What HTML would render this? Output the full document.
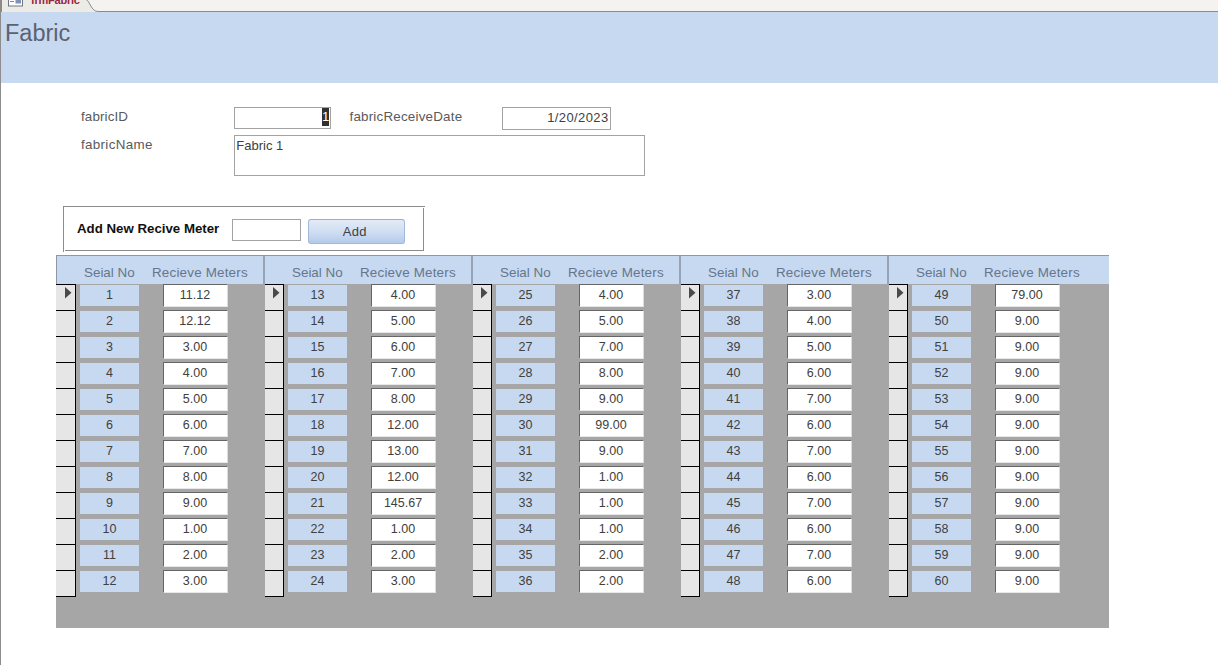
<!DOCTYPE html>
<html lang="en"><head><meta charset="utf-8"><title>frmFabric</title>
<style>
html,body{margin:0;padding:0;}
body{width:1218px;height:665px;overflow:hidden;background:#fff;position:relative;font-family:"Liberation Sans",sans-serif;color:#404040;}
.abs{position:absolute;}
.tabbar{position:absolute;left:0;top:0;width:1218px;height:12px;background:#f3f2ee;overflow:hidden;}
.leftedge{position:absolute;left:0;top:0;width:1px;height:665px;background:#8c8c8c;}
.band{position:absolute;left:1px;top:12px;width:1217px;height:71px;background:#c7d9f0;}
.title{position:absolute;left:5px;top:18px;font-size:23.5px;line-height:30px;color:#5c6270;white-space:nowrap;}
.lbl{position:absolute;font-size:13.4px;line-height:16px;color:#5a5a5a;white-space:nowrap;}
.tb{position:absolute;box-sizing:border-box;border:1px solid #a3a3a3;background:#fff;font-size:13px;line-height:16px;color:#404040;white-space:nowrap;}
.addbox{position:absolute;left:63px;top:206px;width:359px;height:43px;border:1px solid #8c8c8c;box-sizing:content-box;}
.btn{position:absolute;left:308px;top:219px;width:97px;height:25px;box-sizing:border-box;border:1px solid #a3b9d8;border-top-color:#a2acbc;border-radius:3px;background:linear-gradient(#e2ebf7,#d3e0f2 45%,#b4cbec);font-size:13px;letter-spacing:0.4px;line-height:24px;text-align:center;padding-right:3.4px;color:#404040;}
.sub{position:absolute;left:56px;top:255px;width:1053px;height:373px;background:#a6a6a6;overflow:hidden;}
.col{position:absolute;top:0;height:373px;}
.hd{position:absolute;left:0;top:0;width:100%;height:29px;background:#c7d9f0;border-top:1px solid #9197a0;box-sizing:border-box;}
.hd span{position:absolute;top:8px;margin-top:1px;font-size:13.4px;line-height:16px;color:#66758c;white-space:nowrap;}
.h1{left:28px;}
.h2{left:96px;letter-spacing:0.2px;}
.sep{position:absolute;left:-1px;top:1px;width:2px;height:28px;background:#97a4b8;}
.row{position:absolute;left:0;width:208px;height:26px;}
.rs{position:absolute;left:0;top:0;width:20px;height:27px;box-sizing:border-box;background:#e6e6e6;border-right:1px solid #000;border-top:1px solid #000;border-bottom:1px solid #000;}
.rs.b{left:1px;width:19px;}
.tri{position:absolute;left:9px;top:2px;}
.rs.b .tri{left:8px;}
.sn{position:absolute;left:24px;top:1px;width:59px;height:21px;background:#c7d9f0;text-align:center;font-size:12.5px;line-height:21px;color:#404040;}
.rm{position:absolute;left:107px;top:0;width:65px;height:23px;box-sizing:border-box;background:#fff;border-top:1px solid #666;border-left:1px solid #666;border-bottom:1px solid #e8e8e8;border-right:1px solid #dcdcdc;padding-right:1px;text-align:center;font-size:12.5px;line-height:21px;color:#404040;}
.ln{position:absolute;background:#8c8c8c;}
.lb{position:absolute;left:0;top:0;width:1px;height:29px;background:#9197a0;}
</style></head>
<body>
<div class="tabbar">
<svg class="abs" style="left:0;top:0" width="1218" height="12" viewBox="0 0 1218 12">
<rect x="0" y="0" width="1218" height="12" fill="#f4f3ef"/>
<path d="M0,0 L86,0 C90,1 91,11.5 98,11.5 L98,12 L0,12 Z" fill="#edebe6"/>
<path d="M86,-0.5 C90,1 91,11.5 98,11.5 L1218,11.5" fill="none" stroke="#868c92" stroke-width="1"/>
<rect x="0" y="0" width="2" height="12" fill="#8a8a8a"/>
<rect x="8.5" y="-6" width="14" height="12" fill="#fdfdfe" stroke="#6f7787" stroke-width="1"/>
<rect x="15.5" y="0" width="5.5" height="3.5" fill="#7f93b8"/>
<rect x="10" y="1" width="4" height="1" fill="#7f8aa0"/>
</svg>
<div class="abs" style="left:31px;top:-7.3px;font-size:11px;line-height:14px;font-weight:bold;color:#97283f;letter-spacing:-0.22px;white-space:nowrap;">frmFabric</div>
</div>
<div class="band"></div>
<div class="leftedge"></div>
<div class="title">Fabric</div>
<div class="lbl" style="left:81px;top:109px;letter-spacing:0.12px;">fabricID</div>
<div class="lbl" style="left:81px;top:137px;letter-spacing:0.32px;">fabricName</div>
<div class="lbl" style="left:349.5px;top:109px;letter-spacing:0.2px;">fabricReceiveDate</div>
<div class="tb" style="left:234px;top:107px;width:97px;height:22px;"><span class="abs" style="left:87px;top:0;width:7px;height:18px;background:#303030;color:#fff;text-align:center;line-height:18px;font-size:13px;">1</span></div>
<div class="tb" style="left:502px;top:107px;width:109px;height:23px;text-align:right;padding:2px 1.5px 0 0;letter-spacing:0.38px;">1/20/2023</div>
<div class="tb" style="left:234px;top:135px;width:411px;height:41px;padding:2px 0 0 1.3px;">Fabric 1</div>
<div class="ln" style="left:63px;top:206px;width:362px;height:1px;"></div><div class="ln" style="left:63px;top:206px;width:1px;height:46px;"></div><div class="ln" style="left:423px;top:208px;width:1px;height:43px;"></div><div class="ln" style="left:65px;top:250px;width:359px;height:1px;"></div>
<div class="abs" style="left:77px;top:221px;font-size:13.28px;line-height:16px;font-weight:bold;color:#111;white-space:nowrap;">Add New Recive Meter</div>
<div class="tb" style="left:232px;top:219px;width:69px;height:22px;"></div>
<div class="btn">Add</div>
<div class="sub">
<div class="col" style="left:0px;width:208px">
<div class="hd"><span class="h1">Seial No</span><span class="h2">Recieve Meters</span></div>
<div class="lb"></div>
<div class="row" style="top:29px"><div class="rs"><svg class="tri" width="7" height="12" viewBox="0 0 7 12"><polygon points="0,0 6.5,5.75 0,11.5" fill="#4a4a4a"/></svg></div><div class="sn">1</div><div class="rm">11.12</div></div>
<div class="row" style="top:55px"><div class="rs"></div><div class="sn">2</div><div class="rm">12.12</div></div>
<div class="row" style="top:81px"><div class="rs"></div><div class="sn">3</div><div class="rm">3.00</div></div>
<div class="row" style="top:107px"><div class="rs"></div><div class="sn">4</div><div class="rm">4.00</div></div>
<div class="row" style="top:133px"><div class="rs"></div><div class="sn">5</div><div class="rm">5.00</div></div>
<div class="row" style="top:159px"><div class="rs"></div><div class="sn">6</div><div class="rm">6.00</div></div>
<div class="row" style="top:185px"><div class="rs"></div><div class="sn">7</div><div class="rm">7.00</div></div>
<div class="row" style="top:211px"><div class="rs"></div><div class="sn">8</div><div class="rm">8.00</div></div>
<div class="row" style="top:237px"><div class="rs"></div><div class="sn">9</div><div class="rm">9.00</div></div>
<div class="row" style="top:263px"><div class="rs"></div><div class="sn">10</div><div class="rm">1.00</div></div>
<div class="row" style="top:289px"><div class="rs"></div><div class="sn">11</div><div class="rm">2.00</div></div>
<div class="row" style="top:315px"><div class="rs"></div><div class="sn">12</div><div class="rm">3.00</div></div>
</div>
<div class="col" style="left:208px;width:208px">
<div class="hd"><span class="h1">Seial No</span><span class="h2">Recieve Meters</span></div>
<div class="sep"></div>
<div class="row" style="top:29px"><div class="rs b"><svg class="tri" width="7" height="12" viewBox="0 0 7 12"><polygon points="0,0 6.5,5.75 0,11.5" fill="#4a4a4a"/></svg></div><div class="sn">13</div><div class="rm">4.00</div></div>
<div class="row" style="top:55px"><div class="rs b"></div><div class="sn">14</div><div class="rm">5.00</div></div>
<div class="row" style="top:81px"><div class="rs b"></div><div class="sn">15</div><div class="rm">6.00</div></div>
<div class="row" style="top:107px"><div class="rs b"></div><div class="sn">16</div><div class="rm">7.00</div></div>
<div class="row" style="top:133px"><div class="rs b"></div><div class="sn">17</div><div class="rm">8.00</div></div>
<div class="row" style="top:159px"><div class="rs b"></div><div class="sn">18</div><div class="rm">12.00</div></div>
<div class="row" style="top:185px"><div class="rs b"></div><div class="sn">19</div><div class="rm">13.00</div></div>
<div class="row" style="top:211px"><div class="rs b"></div><div class="sn">20</div><div class="rm">12.00</div></div>
<div class="row" style="top:237px"><div class="rs b"></div><div class="sn">21</div><div class="rm">145.67</div></div>
<div class="row" style="top:263px"><div class="rs b"></div><div class="sn">22</div><div class="rm">1.00</div></div>
<div class="row" style="top:289px"><div class="rs b"></div><div class="sn">23</div><div class="rm">2.00</div></div>
<div class="row" style="top:315px"><div class="rs b"></div><div class="sn">24</div><div class="rm">3.00</div></div>
</div>
<div class="col" style="left:416px;width:208px">
<div class="hd"><span class="h1">Seial No</span><span class="h2">Recieve Meters</span></div>
<div class="sep"></div>
<div class="row" style="top:29px"><div class="rs b"><svg class="tri" width="7" height="12" viewBox="0 0 7 12"><polygon points="0,0 6.5,5.75 0,11.5" fill="#4a4a4a"/></svg></div><div class="sn">25</div><div class="rm">4.00</div></div>
<div class="row" style="top:55px"><div class="rs b"></div><div class="sn">26</div><div class="rm">5.00</div></div>
<div class="row" style="top:81px"><div class="rs b"></div><div class="sn">27</div><div class="rm">7.00</div></div>
<div class="row" style="top:107px"><div class="rs b"></div><div class="sn">28</div><div class="rm">8.00</div></div>
<div class="row" style="top:133px"><div class="rs b"></div><div class="sn">29</div><div class="rm">9.00</div></div>
<div class="row" style="top:159px"><div class="rs b"></div><div class="sn">30</div><div class="rm">99.00</div></div>
<div class="row" style="top:185px"><div class="rs b"></div><div class="sn">31</div><div class="rm">9.00</div></div>
<div class="row" style="top:211px"><div class="rs b"></div><div class="sn">32</div><div class="rm">1.00</div></div>
<div class="row" style="top:237px"><div class="rs b"></div><div class="sn">33</div><div class="rm">1.00</div></div>
<div class="row" style="top:263px"><div class="rs b"></div><div class="sn">34</div><div class="rm">1.00</div></div>
<div class="row" style="top:289px"><div class="rs b"></div><div class="sn">35</div><div class="rm">2.00</div></div>
<div class="row" style="top:315px"><div class="rs b"></div><div class="sn">36</div><div class="rm">2.00</div></div>
</div>
<div class="col" style="left:624px;width:208px">
<div class="hd"><span class="h1">Seial No</span><span class="h2">Recieve Meters</span></div>
<div class="sep"></div>
<div class="row" style="top:29px"><div class="rs b"><svg class="tri" width="7" height="12" viewBox="0 0 7 12"><polygon points="0,0 6.5,5.75 0,11.5" fill="#4a4a4a"/></svg></div><div class="sn">37</div><div class="rm">3.00</div></div>
<div class="row" style="top:55px"><div class="rs b"></div><div class="sn">38</div><div class="rm">4.00</div></div>
<div class="row" style="top:81px"><div class="rs b"></div><div class="sn">39</div><div class="rm">5.00</div></div>
<div class="row" style="top:107px"><div class="rs b"></div><div class="sn">40</div><div class="rm">6.00</div></div>
<div class="row" style="top:133px"><div class="rs b"></div><div class="sn">41</div><div class="rm">7.00</div></div>
<div class="row" style="top:159px"><div class="rs b"></div><div class="sn">42</div><div class="rm">6.00</div></div>
<div class="row" style="top:185px"><div class="rs b"></div><div class="sn">43</div><div class="rm">7.00</div></div>
<div class="row" style="top:211px"><div class="rs b"></div><div class="sn">44</div><div class="rm">6.00</div></div>
<div class="row" style="top:237px"><div class="rs b"></div><div class="sn">45</div><div class="rm">7.00</div></div>
<div class="row" style="top:263px"><div class="rs b"></div><div class="sn">46</div><div class="rm">6.00</div></div>
<div class="row" style="top:289px"><div class="rs b"></div><div class="sn">47</div><div class="rm">7.00</div></div>
<div class="row" style="top:315px"><div class="rs b"></div><div class="sn">48</div><div class="rm">6.00</div></div>
</div>
<div class="col" style="left:832px;width:221px">
<div class="hd"><span class="h1">Seial No</span><span class="h2">Recieve Meters</span></div>
<div class="sep"></div>
<div class="row" style="top:29px"><div class="rs b"><svg class="tri" width="7" height="12" viewBox="0 0 7 12"><polygon points="0,0 6.5,5.75 0,11.5" fill="#4a4a4a"/></svg></div><div class="sn">49</div><div class="rm">79.00</div></div>
<div class="row" style="top:55px"><div class="rs b"></div><div class="sn">50</div><div class="rm">9.00</div></div>
<div class="row" style="top:81px"><div class="rs b"></div><div class="sn">51</div><div class="rm">9.00</div></div>
<div class="row" style="top:107px"><div class="rs b"></div><div class="sn">52</div><div class="rm">9.00</div></div>
<div class="row" style="top:133px"><div class="rs b"></div><div class="sn">53</div><div class="rm">9.00</div></div>
<div class="row" style="top:159px"><div class="rs b"></div><div class="sn">54</div><div class="rm">9.00</div></div>
<div class="row" style="top:185px"><div class="rs b"></div><div class="sn">55</div><div class="rm">9.00</div></div>
<div class="row" style="top:211px"><div class="rs b"></div><div class="sn">56</div><div class="rm">9.00</div></div>
<div class="row" style="top:237px"><div class="rs b"></div><div class="sn">57</div><div class="rm">9.00</div></div>
<div class="row" style="top:263px"><div class="rs b"></div><div class="sn">58</div><div class="rm">9.00</div></div>
<div class="row" style="top:289px"><div class="rs b"></div><div class="sn">59</div><div class="rm">9.00</div></div>
<div class="row" style="top:315px"><div class="rs b"></div><div class="sn">60</div><div class="rm">9.00</div></div>
</div>
</div>
</body></html>
